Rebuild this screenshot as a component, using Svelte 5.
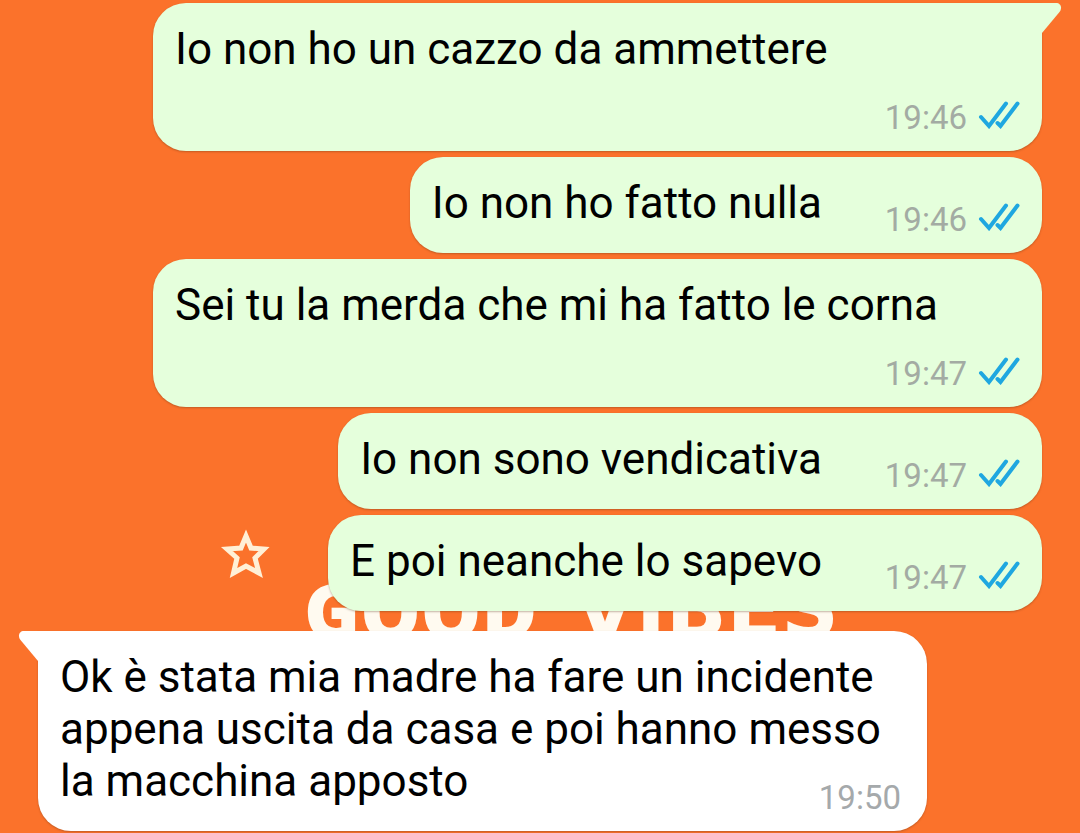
<script>
  const messages = [
    { sent: true, first: true, text: 'Io non ho un cazzo da ammettere', time: '19:46' },
    { sent: true, first: false, text: 'Io non ho fatto nulla', time: '19:46' },
    { sent: true, first: false, text: 'Sei tu la merda che mi ha fatto le corna', time: '19:47' },
    { sent: true, first: false, text: 'Io non sono vendicativa', time: '19:47' },
    { sent: true, first: false, text: 'E poi neanche lo sapevo', time: '19:47' },
    {
      sent: false,
      first: true,
      text: 'Ok è stata mia madre ha fare un incidente appena uscita da casa e poi hanno messo la macchina apposto',
      time: '19:50'
    }
  ];
</script>

<main class="chat">
  <div class="wallpaper" aria-hidden="true">
    <svg class="star" width="52" height="52" viewBox="0 0 52 52">
      <path d="M26 8 L31 20 L44 21 L35 30 L39 45 L26 38 L13.500 45 L17 30 L7 21 L21 20 Z" />
    </svg>
    <span class="word good">GOOD</span>
    <span class="word vibes">VIBES</span>
  </div>

  <ol class="messages">
    {#each messages as message}
      <li class="bubble" class:sent={message.sent} class:received={!message.sent} class:first={message.first}>
        {#if message.first}
          <svg class="tail" width="20" height="32" viewBox="0 0 20 32" aria-hidden="true">
            <path d="M0 0 H14 C19 0 20.500 5 17.500 9 L0 30 Z" />
          </svg>
        {/if}
        <p class="text">{message.text}<span class="spacer"></span></p>
        <div class="meta">
          <time>{message.time}</time>
          {#if message.sent}
            <svg class="ticks" width="42" height="28" viewBox="0 0 42 28" role="img" aria-label="Letto">
              <path d="M3 16 L11 25 L28 2.500" />
              <path d="M19.500 22 L22.500 25 L39.500 2.500" />
            </svg>
          {/if}
        </div>
      </li>
    {/each}
  </ol>
</main>

<style>
  :global(body) {
    margin: 0;
    background: #fb722b;
  }

  .chat {
    position: relative;
    box-sizing: border-box;
    min-height: 100vh;
    overflow: hidden;
    padding: 3px 38px 2px;
    background: #fb722b;
    color: #000;
    font-family: Roboto, sans-serif;
  }

  .star {
    position: absolute;
    left: 220px;
    top: 528px;
    fill: none;
    stroke: #fff0d6;
    stroke-width: 5;
    stroke-linejoin: miter;
  }

  .word {
    position: absolute;
    color: #fffaf0;
  }

  .good {
    left: 304px;
    top: 568px;
    font: 800 76px/84px "Open Sans", sans-serif;
  }

  .vibes {
    left: 574px;
    top: 568px;
    font: 700 80px/84px "DejaVu Sans", sans-serif;
  }

  .messages {
    position: relative;
    display: flex;
    flex-direction: column;
    gap: 6px;
    margin: 0;
    padding: 0;
    list-style: none;
  }

  .bubble {
    position: relative;
    box-sizing: border-box;
    max-width: calc(100% - 115px);
    padding: 20px 22px 24px;
    border-radius: 33px;
    box-shadow: 0 1px 2px rgba(90, 50, 20, 0.35);
  }

  .sent {
    align-self: flex-end;
    background: #e5ffdc;
  }

  .received {
    align-self: flex-start;
    margin-top: 14px;
    background: #fff;
  }

  .sent.first {
    border-top-right-radius: 0;
  }

  .received.first {
    border-top-left-radius: 0;
  }

  .tail {
    position: absolute;
    top: 0;
  }

  .sent .tail {
    left: 100%;
    fill: #e5ffdc;
  }

  .received .tail {
    right: 100%;
    fill: #fff;
    transform: scaleX(-1);
  }

  .text {
    margin: 0;
    font-size: 44px;
    line-height: 52px;
  }

  .spacer {
    display: inline-block;
    width: 198px;
  }

  .received .spacer {
    width: 120px;
  }

  .meta {
    position: absolute;
    right: 22px;
    bottom: 14px;
    display: flex;
    align-items: center;
    gap: 11px;
    color: #a3aba3;
    font-size: 33px;
    line-height: 38px;
  }

  .received .meta {
    right: 26px;
    color: #a5a9ab;
  }

  .ticks {
    margin-bottom: 6px;
    fill: none;
    stroke: #1fa7e0;
    stroke-width: 4;
    stroke-linecap: round;
  }
</style>
